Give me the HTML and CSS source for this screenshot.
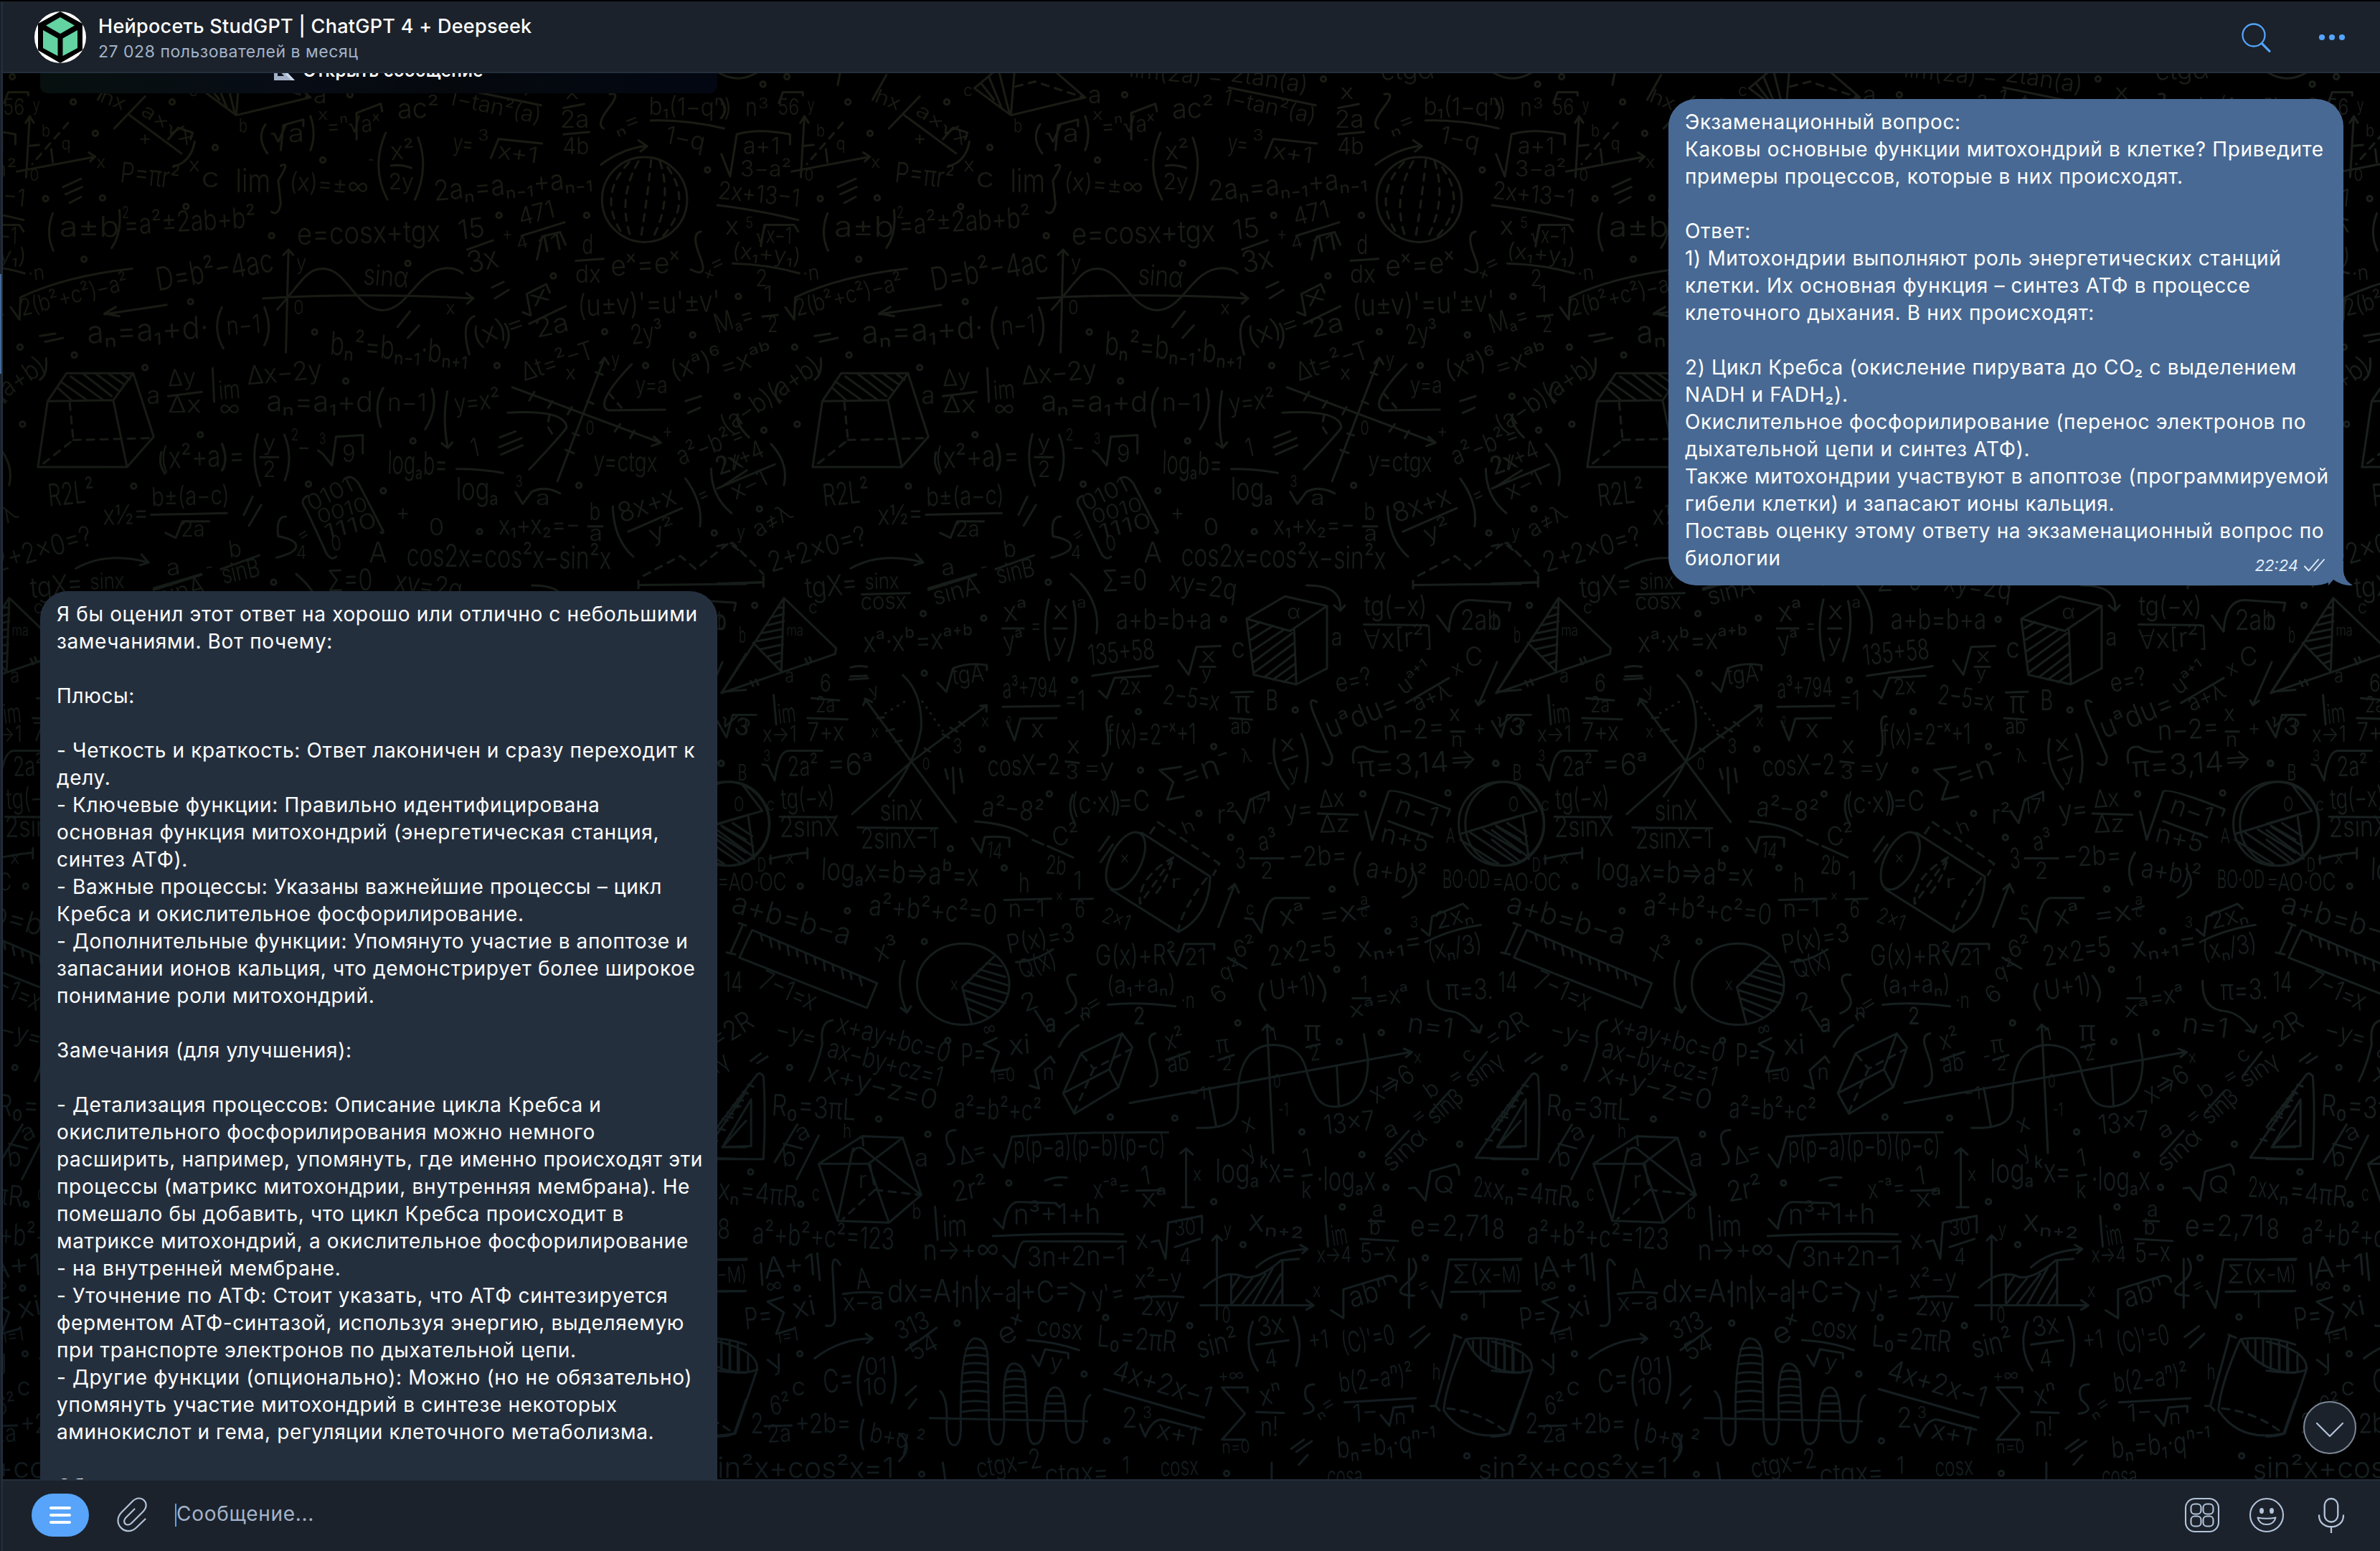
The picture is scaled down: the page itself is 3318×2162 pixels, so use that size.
FILE: index.html
```html
<!DOCTYPE html>
<html lang="ru">
<head>
<meta charset="utf-8">
<title>Нейросеть StudGPT</title>
<link rel="stylesheet" href="styles.css">
</head>
<body>
<div class="app">
  <aside class="rail"><span class="rail-active"></span></aside>
  <main class="chat">
    <header class="header">
      <svg class="avatar" viewBox="0 0 72 72"><circle cx="36" cy="36" r="36" fill="#fff"/><path d="M36 0L67 17V54L36 72L5 54V17Z" fill="#000"/><g fill="#64d3a2"><path d="M36 8L56 19.5L36 31L16 19.5Z"/><path d="M12 26L32.500 37.500V62L12 51Z"/><path d="M60 26L39.500 37.500V62L60 51Z"/></g></svg>
      <div class="peer">
        <div class="peer-name">Нейросеть StudGPT | ChatGPT 4 + Deepseek</div>
        <div class="peer-status">27 028 пользователей в месяц</div>
      </div>
      <div class="header-actions">
        <svg width="44" height="44" viewBox="0 0 44 44" fill="none" stroke="#54a4fb" stroke-linecap="round"><circle cx="18" cy="19" r="15.500" stroke-width="2.300"/><path d="M29.200 30.500L40 41.300" stroke-width="3.200"/></svg>
        <svg width="40" height="12" viewBox="0 0 40 12" fill="#54a4fb"><circle cx="6" cy="6" r="4.100"/><circle cx="20" cy="6" r="4.100"/><circle cx="34" cy="6" r="4.100"/></svg>
      </div>
    </header>

    <section class="history">
      <div class="wallpaper" aria-hidden="true">
        <svg class="wallpaper-art" viewBox="4 102 3314 1960">
          <g id="tile">
            <g class="ink" transform="translate(1000 100) scale(.71429 .45918)">
              <path d="M502 50L540 0M502 50L573 132L718 78L660 0M573 132L580 0M515 35L540 85M530 15L555 110M550 0L570 125M0 0Q40 40 80 0M240 0L235 40M330 10L303 85"/>
              <path class="dash" d="M582 45L620 30L715 78"/>
              <path d="M998 48L1168 102M1212 110L1252 98M1212 190L1262 183M1382 148Q1450 145 1525 172M875 285Q895 280 915 292M120 95L128 62H167V72M395 75L335 172M365 132L466 248M492 212Q485 275 450 288M440 205L460 170L488 185L484 205"/>
              <path d="M163 320L170 135M162 155L170 135L178 155M145 303L298 258M285 245L298 258L288 272M170 225L188 222M212 235L215 275"/><path class="dash" d="M245 155L175 280"/>
              <path d="M8 250L25 318L38 190Q80 170 142 190V220M0 405Q80 420 158 450M85 530L92 465H150L158 485M30 582Q100 585 160 612M1285 282Q1325 235 1372 225M1358 208L1375 226L1362 242"/>
              <ellipse cx="1370" cy="388" rx="83" ry="129"/><path class="dash" d="M1340 275Q1275 380 1330 500M1358 272Q1315 390 1345 510M1383 268Q1375 390 1362 512M1400 272Q1425 390 1385 508M1415 290Q1465 400 1405 500"/>
              <path d="M865 185Q835 290 868 388M928 200Q950 290 922 388M630 160Q612 200 634 248M718 135Q730 190 718 238M660 238L665 162L704 145V165M808 205V125L855 97L858 120M1070 262L1085 204L1170 218M215 430Q200 490 216 543M345 420Q350 490 330 535"/>
              <path d="M675 540L670 852M665 556L675 540L684 556M625 688Q820 670 1036 688M1022 672L1036 688L1024 704M653 722C700 640 710 598 742 598C790 598 805 722 858 724C910 724 925 598 985 596Q1005 596 1015 612"/>
              <path d="M1024 540L1074 512M1130 498L1214 457M1160 570L1170 500L1205 487L1216 525M1236 574L1290 568M1132 730L1148 740L1140 675L1178 645L1185 670M1145 765L1216 712M1480 485Q1460 490 1478 560T1460 600"/>
              <path d="M133 715L150 752L152 685Q240 620 370 598M437 708L316 736M338 714L316 734L345 742M88 743L118 738M545 715Q525 780 548 840M628 715Q645 780 628 830M1028 858Q1010 760 1038 742M1098 765Q1112 800 1098 838"/>
              <path d="M242 915H372L333 997L205 1000ZM205 1000L186 1200L360 1200L412 1108L372 915M333 997L360 1200M230 940L280 995M225 960L252 998M250 925L312 995M275 918L330 985M300 918L345 970M325 918L355 950M350 918L365 935"/><path class="dash" d="M248 1005L255 1118L192 1195M255 1118L412 1112"/>
              <path d="M440 985L506 972M527 900L530 1002M860 960Q840 1010 855 1078M955 962Q968 1020 942 1085M985 970Q975 1060 986 1140M974 1128L986 1142L995 1125M202 870Q205 920 190 935M40 1040Q35 1070 62 1110M118 950Q108 980 122 1005"/>
              <path d="M1112 958L1400 1125M1388 1108L1402 1126L1384 1136M1200 1243L1292 868M1283 885L1292 868L1300 888M1345 888Q1270 1010 1300 1028L1410 1026M1103 1035Q1215 1025 1218 1080Q1210 1100 1145 1207M1155 972L1145 998M1190 1000L1182 1020M1228 1018L1220 1040M1322 1070L1312 1092M1350 1090L1342 1112M1275 912L1288 920M1258 1000L1270 1008M1230 1098L1242 1104M1216 1148L1232 1158"/><path class="dash" d="M1300 975L1325 1020M1185 1040L1180 1075L1195 1112"/>
              <path d="M615 1100Q600 1180 620 1257M667 1102Q685 1170 668 1240M620 1170H655M733 1150L742 1160L760 1195L768 1108L820 1103V1158M1003 1206Q1050 1205 1094 1218M1118 1275L1132 1312L1150 1275Q1175 1255 1205 1280M427 1155Q420 1190 434 1220M545 1130Q558 1180 545 1210"/>
              <path d="M0 1265L112 1192M105 1130Q140 1190 130 1255M407 1345L555 1340M435 1400L455 1415L468 1365H520M712 1288Q695 1300 710 1330L750 1465Q760 1485 768 1472M790 1232Q800 1225 812 1250L860 1395Q860 1405 855 1398M670 1350Q650 1350 655 1410Q690 1420 690 1440T652 1475M543 1510L618 1468M412 1568L505 1525"/>
              <path d="M1260 1380H1288M1338 1396L1443 1325M1308 1320Q1310 1420 1348 1472M1450 1235Q1485 1310 1478 1380M1500 1205Q1500 1290 1540 1340M1570 1210L1520 1260M260 1508Q320 1455 402 1490M388 1465L402 1490L385 1498M0 1556L90 1550M90 1532V1562M1358 1545V1568M1358 1558L1568 1555"/>
              <path class="dash" d="M0 1440L30 1430L90 1525M1368 1530L1440 1470L1470 1510L1535 1430L1568 1470"/>
              <path d="M1302 68Q1325 60 1300 110T1290 172M660 285Q680 270 655 330L660 400Q655 440 642 425M235 350L270 325M240 372L272 350M248 398L270 380M1072 655L1095 638M1078 688L1105 662M888 775L912 728M908 808L930 770M190 802L220 795M200 820L235 808M1088 1110L1118 1092M1086 1140L1130 1112M1090 1162L1132 1134M1450 1000L1480 985M1455 1036L1478 1020M588 1345L605 1290M598 1378L622 1315"/>
            </g>
            <g class="ink" transform="translate(1000 800) scale(.71429 .44643)">
              <path d="M130 75L8 372L230 250L232 232ZM130 75L125 305L70 215M118 105H130M108 135L130 125M98 160L130 148M88 185L128 172M78 210L128 195M85 235L128 220M98 258L127 245M110 280L126 270M0 30L90 26M90 12V40M65 335L70 350M75 330L80 346M172 265L177 282M180 260L184 276"/>
              <path d="M282 64L376 60M412 50L505 3M690 0Q750 80 740 185M556 170H598M647 80Q632 170 648 270M695 85Q708 170 685 272M656 170H682M732 318L860 288M745 365L760 388L775 325L846 318M900 270L920 315L935 228L982 225M942 290H972M1262 158L1386 160M1405 130L1428 180Q1432 80 1470 82L1548 90L1545 115"/>
              <path d="M1033 140L1108 70L1190 100L1118 178ZM1033 140L1047 315L1130 345L1190 295V100M1126 175L1130 345M1040 170L1060 150M1042 205L1085 162M1044 240L1105 175M1046 275L1122 185M1048 308L1126 215M1068 322L1128 248M1085 330L1128 280M1105 338L1130 310M1150 36Q1220 35 1216 112M1204 98L1216 115L1225 98"/>
              <path d="M362 316Q400 370 398 480Q390 580 335 695M288 390L466 775M285 410L290 390L302 400M526 410L380 585L263 750M513 412L526 410L525 430M312 450L325 448M330 490L345 485M348 525L360 520M440 500L452 512M455 480L468 492M472 462L482 474M405 545L415 555"/><path class="dot" d="M328 435L375 390M400 398L440 490"/>
              <path d="M184 388L238 395M176 450L254 454M110 378L115 470M0 460L18 510L30 440L76 440M88 595L98 598L112 645Q120 550 140 552H205M430 340L447 368L460 295Q490 275 526 285V300M557 415L668 412M565 460L580 520L592 452L662 450M1003 370L1046 368M1000 450L1044 455M680 586L706 590M905 602L863 612L890 650L878 705L910 695"/>
              <path d="M1170 400Q1150 380 1165 440L1200 570Q1200 610 1182 590M1345 403L1428 325M1522 275L1485 410M1480 395L1485 410L1497 396M1568 250L1522 368L1568 362M1088 515Q1078 600 1115 672M1140 500Q1160 570 1148 650M1105 582L1132 568M1242 590Q1235 535 1262 540Q1280 560 1308 555M1432 492H1458M770 445Q755 440 762 500Q765 570 752 568M260 292Q275 285 292 290M260 320L292 318M258 330L294 326"/>
              <path d="M122 758L232 760M274 792L430 794M503 773Q570 780 605 818M615 830L636 845M645 850L694 885M497 825L515 870L522 822Q550 818 570 825V852M1012 740L1028 778L1040 705L1076 680V708M1172 748L1250 752M1265 742L1278 830L1310 680Q1318 665 1430 735L1425 755M1310 772L1396 822M694 690Q682 730 698 780M775 680Q788 720 778 752"/>
              <ellipse cx="25" cy="780" rx="77" ry="131"/><path d="M50 660L88 740L0 780M60 752L72 890M0 830L55 898M0 800L68 880M10 790L70 850M30 778L68 818M102 890Q140 875 176 870M104 880V905M176 856V888"/>
              <ellipse cx="1530" cy="780" rx="83" ry="131"/><path d="M1450 812L1568 755M1450 830L1525 905M1470 808L1555 900M1495 798L1568 870M1520 786L1568 830"/>
              <ellipse cx="797" cy="896" rx="32" ry="92" transform="rotate(14 797 896)"/><path d="M828 808L962 945Q960 1070 900 1118L768 985"/><path class="dash" d="M845 810L860 775L980 905L968 940M955 950Q910 1040 900 1110M890 885Q820 950 825 1030L890 885Q880 950 855 1000"/>
              <path d="M560 1018L652 1014M690 1016L733 1014M1040 888H1105M1255 870Q1235 920 1250 970M1355 920Q1380 980 1338 1010M1030 1075L1045 1078L1062 1120Q1070 1015 1090 1012H1155M978 1102L1010 968M998 985L1010 968L1018 995M1250 1048L1272 1038M1375 1110L1390 1130L1395 1070L1455 1030L1465 1045M1382 1150Q1430 1110 1490 1096"/>
              <path d="M68 1112L312 1278L292 1355L43 1198ZM85 1128L88 1145M103 1140L106 1165M120 1152L122 1172M137 1164L140 1190M155 1176L157 1194M172 1188L175 1215M190 1200L192 1218M208 1212L210 1238M225 1224L227 1240M243 1236L246 1262M260 1248L262 1265M278 1260L282 1285M25 1185L50 1095M18 1182L35 1188M42 1090L56 1098"/>
              <ellipse cx="480" cy="1281" rx="90" ry="127"/><path d="M540 1195L478 1290L496 1400M525 1215L555 1225M512 1235L562 1258M500 1252L568 1285M488 1275L568 1312M482 1300L562 1340M485 1325L550 1365M490 1355L530 1385M365 1208Q345 1280 370 1368M358 1355L370 1370L378 1350"/>
              <path d="M583 1212Q620 1210 655 1172M880 1175L897 1222L912 1155H970V1172M996 1198L1033 1232M700 1252Q672 1245 690 1300Q715 1350 680 1372M762 1345Q820 1335 894 1350M1065 1280Q1050 1320 1070 1362M1172 1255Q1195 1300 1182 1335M1240 1325H1275M1387 1270Q1385 1360 1430 1365Q1460 1370 1486 1430M1472 1425L1488 1432L1492 1410M445 610L450 640M460 605L462 685M474 608L478 650M745 865L765 820M748 900L772 845"/>
            </g>
            <g class="ink" transform="translate(1000 1400) scale(.71429 .4273)">
              <path d="M225 52Q200 55 205 130Q195 200 180 250M705 68Q680 90 667 138M620 20L640 72M545 110L520 130L550 155L535 220L568 212M710 160L790 95L810 140L783 270L697 357L675 290ZM675 290L765 212L790 95M765 212L783 270M855 95Q835 100 850 160Q870 260 845 268M876 182L922 155M978 182L1008 165M1150 140L1176 130M610 265L628 275L620 215L650 170L658 190"/><path class="dash" d="M712 165L735 210L805 148M735 210L697 350"/>
              <path d="M805 322L1355 155M1340 145L1356 156L1344 172M1085 485L1073 68M1064 84L1073 66L1084 82M936 403C1040 410 1010 320 1018 250C1025 170 1050 132 1085 132C1130 135 1145 170 1152 230C1165 300 1175 335 1205 334C1260 330 1270 250 1270 180L1262 97M960 272L974 400M1209 200L1213 330"/>
              <path d="M90 505H0M90 505Q95 350 90 235Q82 215 75 235L0 400M66 310V462L10 466ZM60 262L70 268M50 285L60 291M40 308L50 314M30 330L40 336M20 352L30 358M10 374L20 380M1568 505L1480 500L1568 285M1568 380L1522 466H1568M1500 440L1512 445M1515 405L1527 410M1530 365L1542 370M1545 328L1557 333"/>
              <path d="M112 515L156 392M155 570L198 428M130 455L165 470M283 430L362 435L295 520H198L283 430L285 460M198 520L235 706L335 712L398 622L362 435M295 520L335 712M265 470L235 700M265 480Q275 455 290 480L398 622"/><path class="dash" d="M298 520L308 605L245 700M308 605L398 622"/>
              <path d="M465 410Q440 410 450 460Q475 520 450 522M540 490L558 532L575 432Q700 415 880 418M775 470M915 470V662M904 486L915 470L928 490M907 662H930M818 608L866 606M1142 560L1160 556M540 700L558 732Q565 640 590 645L660 648L668 662M538 756Q680 745 792 750M558 820L580 858Q590 770 600 773L798 774M848 775L862 770L875 830L880 712L946 690V745M893 792L942 765M425 660L430 768"/>
              <path d="M1350 600L1362 598L1382 640L1392 545L1440 522Q1448 530 1448 555M1465 235L1502 155M1392 352L1430 282M1305 495L1350 412M1272 706L1302 708M1255 765L1328 772M1395 935L1412 990L1428 832L1568 834M1432 938L1568 935M1187 690L1192 790M1198 998L1222 1024V930L1310 885Q1325 885 1325 905"/>
              <path d="M0 832L58 830M0 936H52M85 845L88 915M195 812L200 900M240 850Q225 810 225 860L230 1020Q230 1055 212 1048M245 945Q280 935 322 942M468 905V985M505 900L508 992M588 900V992M690 910L717 940L705 1000M815 960Q860 948 910 955M975 1028V755M966 770L975 753L985 770M943 982H1163M1150 965L1164 982L1150 996M950 925Q990 860 1030 890Q1060 895 1100 835L1135 830M1103 835V980M1003 880V980M1003 930L1020 885M1005 975L1045 892M1025 978L1070 880M1045 978L1085 858M1065 978L1100 880M1085 978L1102 930M1052 858Q1085 805 1150 798M1138 785L1152 798L1142 812"/>
              <path d="M190 1155Q240 1090 302 1090M290 1075L303 1090L292 1105M368 1128L428 1055M128 955L98 970L130 1005L115 1075L150 1058M0 1100Q80 1130 78 1190Q60 1210 0 1195M78 1190L35 1400Q20 1410 0 1410M8 1110V1190M25 1118V1195M42 1130V1198M60 1145V1198M285 1150Q265 1230 282 1308M342 1150Q355 1230 340 1300"/>
              <path d="M435 1262Q448 1280 448 1350Q445 1435 462 1438Q478 1438 475 1350Q475 1090 503 1090Q530 1090 528 1180L530 1350Q530 1438 548 1436Q560 1436 560 1350Q555 1172 578 1172Q602 1172 602 1250L605 1350Q605 1436 620 1434Q638 1434 638 1350Q640 1248 660 1250Q678 1250 680 1350Q680 1430 697 1430Q715 1430 715 1350Q715 1290 728 1275M415 1350L722 1360M485 1125Q505 1115 525 1125M482 1148Q505 1138 525 1148M480 1175Q505 1165 527 1175M478 1205Q505 1195 527 1205M476 1235Q505 1225 528 1235M476 1265Q505 1255 528 1265M476 1298Q505 1290 528 1298M476 1330Q505 1320 528 1326M565 1200Q580 1190 600 1200M562 1225Q580 1218 602 1225M562 1250Q580 1242 602 1250M560 1278Q580 1270 602 1278M560 1302Q580 1294 602 1302M560 1328H602M645 1278H675M642 1302H678M640 1328H680"/>
              <path d="M605 1095Q660 1100 706 1128M615 1145L628 1180L640 1125L685 1138V1155M755 1255L950 1348M825 1370L835 1410Q850 1350 870 1355L945 1388M985 1250H1035V1265M985 1250L1030 1335L985 1420H1030M1052 1330L1106 1333M1052 1110L1115 1096M1045 1035Q1025 1120 1055 1195M1125 1020Q1145 1100 1130 1180M1165 1240Q1140 1240 1150 1290Q1180 1330 1145 1335M1224 1298L1363 1285M1295 1340L1312 1375L1320 1315L1357 1310V1330M92 1376L145 1374M285 1355Q275 1410 285 1452M355 1400Q385 1440 355 1490"/>
              <path d="M1460 1095Q1420 1250 1418 1325Q1460 1430 1545 1400L1568 1290M1440 1080L1402 1310L1392 1310M1402 1310L1410 1325M1438 1078L1452 1088M1462 1092Q1520 1080 1568 1110M1462 1092Q1490 1200 1568 1202M1475 1098V1130M1490 1095V1160M1505 1095V1178M1520 1098V1190M1536 1100V1198M1552 1108V1202"/><path class="dash" d="M1425 1318Q1490 1330 1540 1395"/>
              <path d="M65 185L85 160M78 192L98 170M640 575Q660 560 682 565M658 590H672M1352 1085L1380 1050M1362 1120L1390 1075M368 1275L388 1245M374 1318L388 1288M1120 1450L1145 1420M1130 1460L1160 1425M1135 1502L1152 1470M440 1495L445 1550M1082 1495V1550M1350 830V990M1358 830Q1375 870 1345 910T1360 950"/>
            </g>
            <g id="formulas" class="formulas"></g>
          </g>
          <use href="#tile" x="-1080"/>
          <use href="#tile" x="1080"/>
          <use href="#tile" x="2160"/>
        </svg>
        <div class="wallpaper-tint"></div>
      </div>

      <div class="keyboard-row">
        <svg width="30" height="30" viewBox="0 0 30 30"><path d="M0 0L29 30H0Z" fill="#a3b1c8"/><path d="M5 14L14 24H5Z" fill="#0a1018"/><path d="M0 0L29 30H24L0 5Z" fill="#c9d5e8"/></svg>
        <span class="keyboard-label">Открыть сообщение</span>
      </div>

      <article class="bubble outgoing"><div class="text">Экзаменационный вопрос:
Каковы основные функции митохондрий в клетке? Приведите
примеры процессов, которые в них происходят.

Ответ:
1) Митохондрии выполняют роль энергетических станций
клетки. Их основная функция – синтез АТФ в процессе
клеточного дыхания. В них происходят:

2) Цикл Кребса (окисление пирувата до CO₂ с выделением
NADH и FADH₂).
Окислительное фосфорилирование (перенос электронов по
дыхательной цепи и синтез АТФ).
Также митохондрии участвуют в апоптозе (программируемой
гибели клетки) и запасают ионы кальция.
Поставь оценку этому ответу на экзаменационный вопрос по
биологии</div>
        <div class="meta"><span class="time">22:24</span><svg width="30" height="20" viewBox="0 0 30 20" fill="none" stroke="#e4eefa" stroke-width="1.900" stroke-linecap="round" stroke-linejoin="round"><path d="M1 11.500L6.500 17.500L20 2"/><path d="M14.500 17.500L28 2"/></svg></div>
        <svg class="tail" width="34" height="34" viewBox="0 0 34 34"><path d="M0 34V0H21V14Q22 27 34 34Q20 35 7 26Z" fill="#486993"/></svg>
      </article>

      <article class="bubble incoming"><div class="text">Я бы оценил этот ответ на хорошо или отлично с небольшими
замечаниями. Вот почему:

Плюсы:

- Четкость и краткость: Ответ лаконичен и сразу переходит к
делу.
- Ключевые функции: Правильно идентифицирована
основная функция митохондрий (энергетическая станция,
синтез АТФ).
- Важные процессы: Указаны важнейшие процессы – цикл
Кребса и окислительное фосфорилирование.
- Дополнительные функции: Упомянуто участие в апоптозе и
запасании ионов кальция, что демонстрирует более широкое
понимание роли митохондрий.

Замечания (для улучшения):

- Детализация процессов: Описание цикла Кребса и
окислительного фосфорилирования можно немного
расширить, например, упомянуть, где именно происходят эти
процессы (матрикс митохондрии, внутренняя мембрана). Не
помешало бы добавить, что цикл Кребса происходит в
матриксе митохондрий, а окислительное фосфорилирование
- на внутренней мембране.
- Уточнение по АТФ: Стоит указать, что АТФ синтезируется
ферментом АТФ-синтазой, используя энергию, выделяемую
при транспорте электронов по дыхательной цепи.
- Другие функции (опционально): Можно (но не обязательно)
упомянуть участие митохондрий в синтезе некоторых
аминокислот и гема, регуляции клеточного метаболизма.

Общее</div></article>

      <button class="to-bottom" aria-label="Вниз"><svg width="40" height="24" viewBox="0 0 40 24" fill="none" stroke="#b3c3da" stroke-width="2.200" stroke-linecap="round" stroke-linejoin="round"><path d="M2 3L20 21L38 3"/></svg></button>
    </section>

    <footer class="composer">
      <button class="menu" aria-label="Меню"><span></span><span></span><span></span></button>
      <svg class="clip" width="44" height="50" viewBox="0 0 44 50" fill="none" stroke="#b3c3da" stroke-width="2.200" stroke-linecap="round"><path d="M24.500 16.500L12.500 28.500C6 35 14 42.500 20.500 36L36.500 20C48 8.500 33 -5.500 22 5.500L6.500 21C-8 36 12 56.500 27 42.500L39.500 30.500"/></svg>
      <div class="field"><span class="caret"></span><span class="placeholder">Сообщение...</span></div>
      <div class="composer-actions">
        <svg width="50" height="50" viewBox="0 0 50 50" fill="none" stroke="#b3c3da" stroke-width="2.100"><rect x="2" y="2" width="46" height="46" rx="13"/><rect x="9.500" y="9.500" width="14" height="14" rx="5"/><rect x="26.500" y="9.500" width="14" height="14" rx="5"/><rect x="9.500" y="26.500" width="14" height="14" rx="5"/><rect x="26.500" y="26.500" width="14" height="14" rx="5"/></svg>
        <svg width="50" height="50" viewBox="0 0 50 50" fill="none" stroke="#b3c3da" stroke-width="2.100"><circle cx="25" cy="25" r="23"/><g fill="#b3c3da" stroke="none"><ellipse cx="18" cy="19" rx="3" ry="4"/><ellipse cx="32" cy="19" rx="3" ry="4"/></g><path stroke-linejoin="round" d="M12.500 28.500Q25 31 37.500 28.500Q35 38 25 38T12.500 28.500Z"/></svg>
        <svg width="50" height="50" viewBox="0 0 50 50" fill="none" stroke="#b3c3da" stroke-width="2.300" stroke-linecap="round"><rect x="15.700" y="2" width="18.600" height="32.500" rx="9.300"/><path d="M8 25.500C8 46.500 42 46.500 42 25.500M25 42V49.500"/></svg>
      </div>
    </footer>
  </main>
</div>
<script src="wallpaper.js"></script>
</body>
</html>
```
FILE: styles.css
```css
* { box-sizing: border-box; }
body { margin: 0; background: #000; font-family: Inter, "Noto Sans", sans-serif; color: #fff; }
button { border: 0; padding: 0; }
svg { display: block; flex: none; }

.app { display: flex; width: 3318px; height: 2162px; padding-top: 2px; overflow: hidden; background: #000; }
.rail { width: 4px; flex: none; background: #1b222b; border-right: 2px solid #242f3d; padding-top: 380px; }
.rail-active { display: block; width: 2px; height: 139px; background: #456a9b; }
.chat { flex: 1; display: flex; flex-direction: column; min-width: 0; }

.header { height: 100px; flex: none; display: flex; align-items: center; padding: 6px 47px 0 44px; background: #1b222b; border-bottom: 2px solid #242f3d; position: relative; z-index: 1; }
.avatar { width: 72px; height: 72px; margin-bottom: 4px; }
.peer { margin-left: 17px; flex: 1; white-space: nowrap; }
.peer-name { font-size: 27px; line-height: 36px; font-weight: 500; letter-spacing: 0.28px; }
.peer-status { font-size: 23px; line-height: 34px; color: #a3b3ca; letter-spacing: 0.52px; }
.header-actions { display: flex; align-items: center; gap: 63px; margin-bottom: 4px; }

.history { height: 1960px; flex: none; position: relative; overflow: hidden; display: flex; flex-direction: column; padding: 0 51px 0 52px; }
.wallpaper { position: absolute; inset: 0; isolation: isolate; background: #000; }
.wallpaper-art { width: 100%; height: 100%; }
.wallpaper-tint { position: absolute; inset: 0; mix-blend-mode: multiply; background: linear-gradient(to right, rgba(28, 36, 36, 0), rgba(28, 36, 36, 0.5)), linear-gradient(#1a1a10, #141b18 45%, #101a1f); }
.ink { fill: none; stroke: #fff; stroke-width: 3px; stroke-linecap: round; stroke-linejoin: round; }
.ink * { vector-effect: non-scaling-stroke; }
.ink .dash { stroke-dasharray: 10 9; }
.ink .dot { stroke-dasharray: 1 9; }
.formulas { fill: #fff; font-family: Inter, "DejaVu Sans", sans-serif; font-weight: 300; }
.formulas circle { fill: none; stroke: #fff; stroke-width: 3px; }

.keyboard-row { position: relative; width: 944px; height: 28px; flex: none; display: flex; justify-content: center; align-items: flex-end; gap: 10px; padding: 0 0 18px; border-radius: 0 0 10px 10px; background: linear-gradient(100deg, #07100f, #080d16 35%, #05090e 60%, #030712); font-size: 24px; font-weight: 600; line-height: 32px; letter-spacing: 0.3px; white-space: nowrap; }
.keyboard-label { margin-bottom: -3px; }

.bubble { position: relative; flex: none; border-radius: 38px; }
.text { font-size: 28px; line-height: 38px; white-space: pre; letter-spacing: 0.64px; }
.outgoing { align-self: flex-end; width: 941px; height: 678px; margin-top: 8px; padding: 13px 23px; background: #486993; }
.incoming { width: 944px; height: 1400px; margin-top: 8px; padding: 13px 23px; background: #242f3e; }
.meta { position: absolute; right: 25px; bottom: 14px; display: flex; align-items: center; gap: 8px; font-size: 22px; line-height: 28px; font-style: italic; color: #e4eefa; }
.tail { position: absolute; right: -13px; bottom: 0; }
.to-bottom { position: absolute; right: 33px; bottom: 35px; width: 74px; height: 74px; border-radius: 50%; border: 2px solid #7d8896; background: #1b222b; display: flex; align-items: center; justify-content: center; padding-top: 6px; }

.composer { height: 100px; flex: none; display: flex; align-items: center; padding: 0 43px 2px 40px; background: #1b222b; border-top: 2px solid #242f3d; }
.menu { width: 80px; height: 60px; border-radius: 30px; background: #57a4fa; display: flex; flex-direction: column; align-items: center; justify-content: center; gap: 6px; }
.menu span { width: 30px; height: 4px; border-radius: 2px; background: #fff; }
.clip { margin-left: 39px; }
.field { display: flex; align-items: center; flex: 1; margin-left: 37px; height: 60px; font-size: 28px; color: #a3b3ca; letter-spacing: 0.7px; }
.caret { width: 2px; height: 32px; background: #57a4fa; }
.placeholder { margin-bottom: 4px; }
.composer-actions { display: flex; gap: 40px; }
```
FILE: wallpaper.js
```js
// Each band: origin y, vertical unit, then formulas as
// "x0 y0 x1 y1 fontSize text" - the baseline runs from (x0,y0) to (x1,y1).
const UNIT_X = 1120 / 1568;
const bands = [
  { y: 100, unit: 720 / 1568, formulas: `
0 135 25 135 34 )
55 135 78 135 40 n
80 112 100 112 22 3
118 130 160 130 34 56
176 120 190 120 28 y
305 90 352 118 30 hx
385 128 480 225 30 a×√x
382 222 408 222 32 +
480 75 498 75 26 c
724 95 750 95 38 a
578 182 595 182 28 b
803 15 985 45 36 lim(2a) −
1000 28 1150 65 36 2tan(a)
985 98 1165 158 34 1−tan²(a)
1215 82 1242 82 32 x
1205 170 1262 170 38 2a
1210 250 1262 250 36 4b
1295 25 1400 20 38 ctgα
1378 130 1540 135 38 b₁(1−qⁿ)
1315 190 1365 160 34 ₙ=
1408 215 1485 240 38 1−q
640 215 706 212 38 √a
732 145 752 145 24 x
750 190 855 180 36 =ⁿ√aˣ
888 142 970 138 42 ac²
875 268 922 262 38 x²
870 358 920 358 34 2y
830 285 842 285 30 -
995 240 1035 245 38 y=
1045 210 1066 210 24 3
1082 262 1160 278 34 x+1
50 248 122 250 36 a+1
45 318 145 318 34 3−a²
193 195 210 195 26 b
232 235 250 235 26 q
300 292 318 292 26 x
170 332 188 332 26 0
345 335 460 355 44 P=πr²
480 302 502 302 30 x
505 350 540 350 42 c
572 365 640 365 50 lim
676 358 830 375 38 (x)=±∞
960 392 1270 350 44 2aₙ=aₙ₋₁+aₙ₋₁
0 385 160 410 38 2x+13−1
15 495 42 495 38 x
55 475 70 475 24 5
75 518 145 522 36 √x−1
28 565 162 585 34 (x₁+y₁)
228 500 345 500 44 a±b
350 445 364 445 26 2
355 495 612 472 44 =a²±2ab+b²
692 525 972 515 46 e=cosx+tgx
1008 510 1060 500 42 15
1092 512 1112 512 30 +
1028 612 1088 592 46 3x
1128 468 1198 440 38 471
1122 540 1145 530 26 4
1165 552 1212 538 34 11
1248 552 1270 552 42 d
1235 640 1285 640 38 dx
1305 620 1440 608 44 eˣ=eˣ
1488 620 1530 590 34 ₓ=
75 650 98 650 36 2
168 635 200 630 32 ·n
90 700 108 700 34 1
98 790 118 790 34 2
0 795 75 760 42 Mₐ=
155 742 365 660 36 2(b²+c²)−a²
420 665 648 605 50 D=b²−4ac
690 600 710 600 32 y
820 645 908 655 44 sinα
685 735 705 735 30 0
982 735 1000 735 28 x
1152 715 1188 690 34 x
1160 808 1225 785 40 2a
1240 742 1518 728 46 (u±v)'=u'±v'
1345 828 1408 815 42 2y³
283 825 520 808 48 aₙ=a₁+d·
555 800 622 792 40 n−1
755 858 1025 888 50 bₙ²=bₙ₋₁·bₙ₊₁
1040 835 1140 780 40 (x)=
10 925 112 875 40 =xᵃᵇ
1135 940 1275 868 40 Δt=²−T
1215 935 1236 935 30 x
1305 895 1322 895 32 y
1352 975 1415 975 36 y=a
1425 935 1525 890 40 (xᵃ)⁶
20 1100 205 905 40 (a−b)(a+b)
398 1008 425 1008 38 a
440 955 495 950 36 Δy
440 1035 505 1035 36 Δx
540 995 582 990 40 im
595 950 742 930 40 Δx−2y
540 1045 580 1045 36 ∞
632 1030 840 1032 44 aₙ=a₁+d
868 1030 945 1030 38 n−1
1000 1035 1090 1020 40 y=x²
1255 1102 1272 1102 30 0
1405 1110 1425 1110 30 +
425 1205 590 1195 46 (x²+a)=
625 1150 650 1150 34 y
625 1230 650 1230 34 2
680 1120 695 1120 26 2
692 1165 718 1165 40 −
735 1130 748 1130 24 3
780 1185 806 1185 38 9
868 1220 985 1225 50 logₐb=
1035 1170 1050 1165 40 1
1002 1300 1085 1300 48 logₐ
1118 1260 1132 1260 26 3
1158 1315 1186 1315 32 a
1270 1210 1395 1215 42 y=ctgx
1440 1195 1568 1120 40 a²−b²=
5 1225 95 1165 38 2x+4
35 1300 102 1250 36 x−1
208 1320 298 1305 48 R2L²
313 1375 402 1372 42 x½=
408 1318 560 1312 40 b±(a−c)
465 1412 512 1412 34 2a
720 1335 805 1270 34 0101
735 1372 832 1330 30 0010
748 1420 850 1380 32 1110
760 1455 780 1450 32 0
700 1430 720 1410 30 =
690 1478 710 1478 28 4
885 1360 912 1360 36 +
950 1408 980 1405 36 0
832 1490 868 1490 44 A
905 1500 1305 1510 48 cos2x=cos²x−sin²x
1085 1405 1245 1400 40 x₁+x₂=−
1262 1362 1284 1362 38 b
1262 1425 1288 1425 34 a
1325 1370 1435 1310 42 8x+x
1385 1430 1435 1400 36 y²
1480 1310 1500 1295 34 =
1515 1225 1565 1200 38 2x
80 1415 150 1350 36 a≠λ
38 1418 55 1418 30 y
105 1520 295 1435 44 2+2×0=?
438 1530 465 1525 34 a
515 1525 530 1520 30 -
560 1475 585 1470 36 b
548 1555 622 1530 40 sinB
` },
  { y: 800, unit: 700 / 1568, formulas: `
172 75 275 62 44 tgX=
288 48 355 45 34 sinx
280 112 370 108 36 cosx
425 98 515 60 38 sinA
752 55 840 50 46 Σ=0
880 52 1012 80 44 xy=2q
560 150 608 140 42 xᵃ
560 240 600 232 40 yᵃ
612 185 632 185 36 =
655 140 685 140 38 x
655 240 682 240 36 y
702 105 720 105 24 a
778 172 965 172 44 a+b=b+a
725 285 855 265 44 135+58
785 378 828 372 34 2x
945 275 972 275 30 x
945 330 965 330 28 y
1003 262 1030 262 44 c
1112 138 1138 138 30 α
1198 225 1220 225 38 a
1262 130 1385 130 42 tg(−x)
1262 235 1398 225 42 ∀x[r²]
1450 175 1530 175 44 2ab
1460 288 1495 285 40 C
0 175 18 175 40 b
42 215 56 215 34 b
135 192 168 192 24 ma
178 122 196 122 28 c
132 338 150 338 30 a
285 245 500 230 44 xᵃ·xᵇ=xᵃ⁺ᵇ
200 368 222 368 38 6
192 432 230 432 34 2a
120 468 155 462 42 im
88 525 155 525 34 x→1
176 522 248 520 40 7+x
300 385 318 375 26 y
300 510 315 510 26 x
515 478 530 478 26 x
460 560 478 560 32 3
400 612 415 612 26 0
36 505 62 505 38 3
460 345 522 335 38 tgA
557 388 665 382 42 a³+794
678 425 718 425 42 =1
565 480 575 480 24 2
612 510 638 510 38 x
868 405 978 428 42 2−5=x
1010 435 1040 435 48 π
1002 500 1042 498 34 ab
1070 425 1095 425 44 B
1210 370 1280 345 40 e=?
1340 380 1400 310 36 uᵃ⁺¹
1440 320 1458 305 30 x
1195 515 1335 425 46 uᵃdu=
1365 430 1435 380 36 a+λ
1428 458 1450 458 34 x
1300 520 1420 510 42 n−2=
1432 540 1455 540 32 n
1475 505 1500 505 34 +
1515 470 1568 510 36 √3
762 535 935 530 44 f(x)=2⁻ˣ+1
682 560 708 560 36 x
528 632 670 625 44 cosX−2
680 640 705 640 32 3
715 630 775 630 36 =y
910 665 1010 610 46 =n⁻
1025 590 1045 585 30 λ
1100 555 1128 550 34 x
1115 645 1138 640 34 y
1072 610 1085 610 30 -
1250 635 1485 610 44 π=3,14=>
90 585 104 585 24 3
138 632 198 628 42 2a²
215 630 305 625 46 =6ᵃ
40 645 58 645 34 B
32 742 52 742 32 O
96 740 112 740 28 c
125 735 230 725 44 tg(−x)
122 822 238 818 44 2sinX
318 770 402 768 44 sinX
280 858 430 855 44 2sinX−1
515 755 635 775 42 a²−8²
525 885 555 890 34 14
690 748 845 738 44 (c·x)=C
655 850 708 840 40 C²
640 935 680 940 40 2b
912 815 935 800 28 h
885 980 905 980 28 r
785 905 805 905 28 ×
975 780 1012 780 40 r²
1038 750 1075 745 32 17
1108 770 1165 758 42 y=
1175 730 1225 725 38 Δx
1175 808 1235 805 38 Δz
1320 745 1400 790 42 n−1
1292 835 1385 870 40 n+5
1422 840 1440 840 32 A
78 930 95 930 30 D
132 905 150 905 26 x
202 955 510 975 48 logₐx=b=>aᵇ=x
588 995 610 995 42 h
695 985 712 985 40 1
568 1072 640 1070 38 n−1
660 1022 675 1022 26 ×
698 1072 718 1072 38 6
1012 920 1032 918 44 3
1058 865 1095 855 40 a³
1060 952 1085 952 36 2
1115 915 1230 905 42 −2b=
1265 945 1380 975 42 a+b)²
1415 980 1508 980 40 BO·OD
0 990 135 988 38 =AO·OC
25 1055 255 1160 46 a+b=b−a
295 1065 545 1095 44 a²+b²+c²=0
748 1085 800 1115 34 2×1
1032 1065 1048 1065 28 c
1100 1100 1150 1085 42 xᵃ
1175 1095 1250 1080 42 =x
1255 1032 1270 1032 24 a
1255 1070 1270 1070 24 c
1352 1105 1368 1105 24 3
1405 1110 1478 1080 36 2xₙ
1250 1200 1378 1170 44 xₙ₊₁=
1388 1205 1495 1180 40 (xₙ/3)
312 1212 358 1190 42 x³
455 1298 470 1298 26 x
568 1185 700 1145 40 P(x)=3
595 1265 665 1225 40 Q(x)
738 1222 895 1220 44 G(x)+R²
912 1222 955 1220 36 21
1012 1200 1055 1180 36 6²
1078 1225 1210 1192 44 2×2=5
12 1305 50 1305 44 14
78 1290 185 1365 42 7−1=x
985 1270 1025 1250 34 q²
975 1345 998 1320 36 6
708 1390 755 1345 34 ₙ=
760 1310 895 1305 38 (a₁+aₙ)
812 1405 835 1405 36 2
905 1355 932 1355 34 ·n
1080 1330 1172 1310 42 U+1)
1255 1308 1270 1308 36 1
1235 1385 1285 1375 32 xᵃ
1285 1350 1352 1335 38 =xᵃ
1422 1330 1515 1327 44 π=3.
600 1370 630 1350 38 2
640 1430 662 1430 38 a
` },
  { y: 1400, unit: 670 / 1568, formulas: `
812 65 835 65 36 2
708 45 730 45 30 n
0 150 75 70 42 =2R
110 105 190 140 40 −y=
230 90 450 190 42 x+ay+bc=0
212 170 435 268 42 ax−by+cz=1
205 250 425 345 42 x+y−z=0
475 200 525 200 48 P=
522 105 545 95 30 ∞
570 165 612 160 42 xi
538 255 582 250 30 i=0
635 245 658 245 34 n
640 90 662 90 38 a
878 150 915 135 40 x²
880 222 922 215 38 ab
975 160 1000 155 38 π
960 190 975 185 30 −
985 215 1005 215 30 2
1145 120 1178 120 44 π
1158 185 1178 180 34 2
1080 120 1095 115 28 1
1085 272 1100 272 28 0
920 312 955 310 28 −1
1095 365 1115 365 28 -1
1360 192 1375 190 26 x
1345 90 1435 110 42 n=1
1285 325 1365 245 42 x=>6
1185 425 1285 408 42 13×7
1030 420 1052 405 36 x
1035 510 1055 490 36 y
1465 195 1482 170 32 c
1472 275 1540 195 36 sinγ
1435 265 1460 240 34 =
1390 310 1412 285 34 b
1400 395 1460 310 36 sinβ
1365 395 1388 365 34 =
1308 440 1332 420 34 a
1315 550 1388 440 38 sinα
105 362 270 378 46 R₀=3πL
462 370 632 380 44 a²=b²+c²
160 450 185 430 36 a
128 530 155 525 40 b
245 435 262 435 30 h
385 528 412 528 38 a
275 600 292 600 36 r
185 640 200 640 34 c
380 700 398 700 32 b
475 525 530 500 38 Δ=
578 500 875 490 46 p(p−a)(p−b)(p−c)
462 645 530 625 44 2r²
735 635 808 622 40 x⁻ᵃ=
830 590 848 585 40 1
828 662 880 655 38 xᵃ
928 575 945 575 30 x
972 580 1130 580 50 logₐᵏx=
1145 530 1162 525 38 1
1140 632 1160 632 36 k
1170 605 1285 605 50 ·logₐx
1400 618 1440 610 36 Q
1475 628 1512 630 44 2x
0 635 155 660 44 xₙ=4πR
0 765 25 765 44 8
68 780 345 800 46 a²+b²+c²=123
440 758 488 755 46 im
402 835 550 828 44 n→+∞
578 718 748 715 44 n³+1+h
605 855 798 850 42 3n+2n−1
818 800 842 795 40 x
893 755 935 750 34 30
902 850 925 850 36 4
988 755 1004 755 30 y
1035 738 1145 750 46 xₙ₊₂
1202 788 1232 780 44 im
1170 842 1238 840 34 x→4
1255 842 1325 838 42 5−x
1278 692 1300 692 34 a
1272 752 1295 752 34 b
1352 755 1508 755 46 e=2,71
0 910 58 905 34 −M)
92 895 195 882 46 A+1
272 930 300 925 44 A
245 1000 325 995 38 x−a
332 970 470 970 48 dx=A·
475 970 585 970 44 n|x−a
592 975 690 968 46 +C=
735 985 798 965 42 y'=
815 925 908 920 38 x²−y
825 1012 900 1020 42 2xy
985 1040 1002 1040 34 0
1162 955 1178 955 30 x
1372 945 1395 925 32 =
1435 910 1512 908 40 Σ(x
1485 990 1502 990 34 1
1238 990 1315 955 44 abⁿ
55 1060 110 1050 46 P=
98 945 128 935 32 ∞
150 1025 195 1010 42 xi
120 1105 160 1095 30 i=1
355 1095 418 1050 38 313
385 1165 435 1120 38 54
558 1115 610 1070 46 eˣ
622 1080 712 1095 42 cosx
648 1190 672 1195 34 y
740 1115 895 1135 46 L₀=2πR
940 1155 1020 1125 46 sin²
1058 1085 1108 1070 42 3x
1070 1185 1095 1180 38 4
1155 1128 1195 1120 40 +1
1222 1140 1325 1108 44 (C)'=0
105 1200 135 1175 38 y
145 1275 172 1275 38 c
208 1268 268 1260 50 C=
288 1208 332 1205 36 01
285 1275 332 1272 36 10
768 1220 960 1315 44 4x+2x−1
790 1380 820 1380 44 2
830 1350 848 1350 26 3
855 1415 935 1440 40 x+1
978 1232 1028 1228 28 +∞
1062 1310 1105 1295 42 xⁿ
1060 1408 1095 1408 42 n!
985 1465 1040 1462 28 n=0
1172 1350 1210 1310 34 ₙ=
1215 1265 1360 1235 42 b(2−aⁿ)²
1240 1362 1290 1358 38 1−
1322 1370 1345 1368 32 n
1395 1225 1412 1225 34 h
105 1340 145 1330 40 6²
65 1400 90 1400 44 2
98 1430 145 1425 38 2a
152 1400 262 1395 42 +2b=
295 1425 400 1460 42 b+q ²
1210 1480 1405 1455 46 bₙ=b₁·qⁿ⁻¹
0 1545 345 1545 44 in²x+cos²x=1
508 1545 635 1510 42 ctgx−2
640 1565 765 1555 42 ctgx=
790 1530 805 1530 36 1
865 1540 940 1535 40 cosx
1190 1568 1260 1568 40 cosa
1485 1550 1512 1550 42 s
` },
];
const dots = [
  [0, '89 38,255 92,448 92,298 187,532 230,795 70,742 268,201 385,312 383,475 409,642 498,1086 436,1257 436,276 569,908 582,484 698,41 682,726 790,1192 620,1292 789,1464 799,151 836,257 860,395 898,787 939,1082 892,1372 892,39 985,156 1070,91 1088,503 1102,918 1121,373 1258,714 1252,860 1272,1242 1256,1048 1396,82 1327,1506 1400,646 1550,1183 22,1493 298,136 15'],
  [1, '73 98,402 124,520 138,988 142,404 310,697 331,822 430,1128 425,517 547,969 539,826 613,1519 591,8 592,648 687,1260 687,1426 684,940 748,455 858,1002 823,560 918,1200 984,162 975,254 1052,404 1148,1309 1115,1209 1235,1016 1402'],
  [2, '450 118,1296 92,1214 122,141 206,767 368,893 371,315 374,411 424,1141 416,1449 456,1258 490,65 547,569 583,163 652,969 644,1305 597,1220 661,1026 784,1382 827,156 926,468 1040,758 1022,922 1048,1458 1020,161 1140,716 1206,760 1424,1463 1473,399 1533,994 1530'],
];

const NS = 'http://www.w3.org/2000/svg';
const layer = document.getElementById('formulas');
const px = (x) => 1000 + x * UNIT_X;
const add = (name, attrs, text) => {
  const node = document.createElementNS(NS, name);
  for (const key in attrs) node.setAttribute(key, attrs[key]);
  if (text) node.textContent = text;
  layer.appendChild(node);
};
for (const band of bands) {
  const py = (y) => band.y + y * band.unit;
  for (const row of band.formulas.trim().split('\n')) {
    const [x0, y0, x1, y1, size, ...rest] = row.split(' ');
    const ax = px(+x0), ay = py(+y0), dx = px(+x1) - ax, dy = py(+y1) - ay;
    add('text', {
      x: ax.toFixed(1), y: ay.toFixed(1), 'font-size': size * 0.9,
      textLength: Math.hypot(dx, dy).toFixed(1), lengthAdjust: 'spacingAndGlyphs',
      transform: `rotate(${(Math.atan2(dy, dx) * 180 / Math.PI).toFixed(1)} ${ax.toFixed(1)} ${ay.toFixed(1)})`,
    }, rest.join(' '));
  }
}
for (const [index, list] of dots) {
  for (const pair of list.split(',')) {
    const [x, y] = pair.split(' ').map(Number);
    add('circle', { cx: px(x).toFixed(1), cy: (bands[index].y + y * bands[index].unit).toFixed(1), r: 3.6 });
  }
}
```
